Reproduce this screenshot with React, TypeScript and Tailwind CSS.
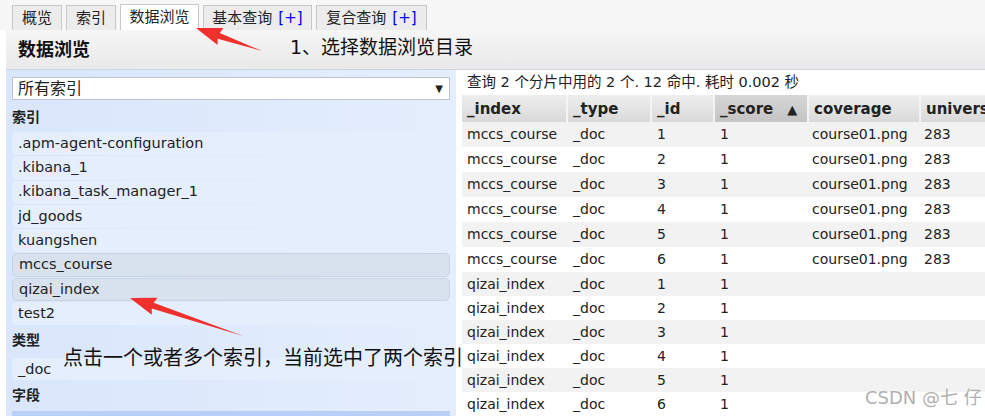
import React from "react";

const font = "font-['DejaVu_Sans','Noto_Sans_CJK_SC',sans-serif]";

const indices = [
  { name: ".apm-agent-configuration", sel: false },
  { name: ".kibana_1", sel: false },
  { name: ".kibana_task_manager_1", sel: false },
  { name: "jd_goods", sel: false },
  { name: "kuangshen", sel: false },
  { name: "mccs_course", sel: true },
  { name: "qizai_index", sel: true },
  { name: "test2", sel: false },
];

const rows = [
  ...[1, 2, 3, 4, 5, 6].map((n) => ({ index: "mccs_course", id: n, cov: "course01.png", uni: "283" })),
  ...[1, 2, 3, 4, 5, 6].map((n) => ({ index: "qizai_index", id: n, cov: "", uni: "" })),
];

const Tab = ({ label, plus, active, w }: { label: string; plus?: boolean; active?: boolean; w: string }) => (
  <div
    className={`${w} h-[25px] border border-b-0 border-[#c8c8c8] flex items-center justify-center text-[15px] text-[#222] ${
      active ? "bg-white h-[26px]" : "bg-[#ececec]"
    }`}
  >
    {label}
    {plus && <span className="ml-[6px] text-[#0000ee]">[+]</span>}
  </div>
);

const Arrow = ({ x1, y1, x2, y2 }: { x1: number; y1: number; x2: number; y2: number }) => {
  // tapered red arrow pointing from (x1,y1) to tip (x2,y2)
  const dx = x2 - x1;
  const dy = y2 - y1;
  const len = Math.hypot(dx, dy);
  const ux = dx / len;
  const uy = dy / len;
  const px = -uy;
  const py = ux;
  const headLen = 24;
  const bx = x2 - ux * headLen;
  const by = y2 - uy * headLen;
  const pts = [
    [x1, y1],
    [bx + px * 3, by + py * 3],
    [bx + px * 9 - ux * 2, by + py * 9 - uy * 2],
    [x2, y2],
    [bx - px * 9 - ux * 2, by - py * 9 - uy * 2],
    [bx - px * 3, by - py * 3],
  ]
    .map((p) => p.join(","))
    .join(" ");
  return <polygon points={pts} fill="#f0302c" />;
};

export default function App() {
  return (
    <div className={`${font} relative w-[985px] h-[416px] overflow-hidden bg-white text-[#222]`}>
      {/* tabs */}
      <div className="h-[30px] flex items-end pl-[12px] gap-[4px] bg-[#f7f7f7]">
        <Tab label="概览" w="w-[50px]" />
        <Tab label="索引" w="w-[50px]" />
        <Tab label="数据浏览" w="w-[79px]" active />
        <Tab label="基本查询" plus w="w-[109px]" />
        <Tab label="复合查询" plus w="w-[111px]" />
      </div>

      {/* header */}
      <div className="ml-[6px] h-[40px] flex items-center pl-[12px] bg-gradient-to-b from-[#f6f6f6] to-[#e9e9e9] border-b border-[#d0d6e0]">
        <span className="text-[18px] font-bold text-[#111]">数据浏览</span>
      </div>

      <div className="flex ml-[6px]">
        {/* left panel */}
        <div className="w-[450px] h-[346px] bg-gradient-to-r from-[#d9e6fb] to-[#e4eefd] px-[6px] pt-[7px]">
          <div className="h-[23px] bg-white border border-[#bcc3cc] flex items-center justify-between pl-[5px] pr-[6px]">
            <span className="text-[16px] leading-none text-[#222]">所有索引</span>
            <span className="text-[10px]">▼</span>
          </div>
          <div className="text-[14px] font-bold mt-[8px] h-[18px] leading-[18px]">索引</div>
          <div className="mt-[6px] flex flex-col gap-[1px]">
            {indices.map((it) => (
              <div
                key={it.name}
                className={`h-[23.3px] rounded-[5px] flex items-center pl-[6px] text-[14.5px] ${
                  it.sel ? "bg-[#d8e2ee] border border-[#c7d4e6]" : "bg-[#e5eefd]"
                }`}
              >
                {it.name}
              </div>
            ))}
          </div>
          <div className="text-[14px] font-bold mt-[6px] h-[18px] leading-[18px]">类型</div>
          <div className="mt-[9px] h-[22px] rounded-[5px] flex items-center pl-[6px] text-[14.5px] bg-[#e5eefd]">_doc</div>
          <div className="text-[14px] font-bold mt-[6px] h-[18px] leading-[18px]">字段</div>
          <div className="mt-[7px] h-[10px] bg-[#b9cff7]" />
        </div>

        {/* right panel */}
        <div className="flex-1 pl-[6px] overflow-hidden">
          <div className="h-[25px] flex items-center pl-[5px] text-[14.5px] text-[#222] whitespace-nowrap">
            查询 2 个分片中用的 2 个. 12 命中. 耗时 0.002 秒
          </div>
          <table className="table-fixed border-collapse w-[560px] text-[14px]">
            <colgroup>
              <col className="w-[105px]" />
              <col className="w-[84px]" />
              <col className="w-[63px]" />
              <col className="w-[94px]" />
              <col className="w-[112px]" />
              <col className="w-[102px]" />
            </colgroup>
            <thead>
              <tr className="h-[27px] text-[15px] font-bold text-[#222]">
                {["_index", "_type", "_id"].map((h) => (
                  <th key={h} className="text-left pl-[5px] pt-[2px] bg-gradient-to-b from-[#eeeeee] to-[#d9d9d9] border-r-2 border-[#f4f4f4]">
                    {h}
                  </th>
                ))}
                <th className="text-left pl-[5px] pt-[2px] bg-gradient-to-b from-[#d6d6d6] to-[#c4c4c4] border-r-2 border-[#f4f4f4] whitespace-nowrap">
                  <span>_score</span>
                  <span className="ml-[14px] text-[13px]">▲</span>
                </th>
                {["coverage", "univers"].map((h) => (
                  <th key={h} className="text-left pl-[5px] pt-[2px] bg-gradient-to-b from-[#eeeeee] to-[#d9d9d9] border-r-2 border-[#f4f4f4] whitespace-nowrap overflow-hidden">
                    {h}
                  </th>
                ))}
              </tr>
            </thead>
            <tbody>
              {rows.map((r, i) => (
                <tr key={i} className={`${i < 6 ? "h-[25px]" : "h-[24px]"} ${i % 2 === 0 ? "bg-[#f2f2f2]" : "bg-white"}`}>
                  <td className="pl-[5px]">{r.index}</td>
                  <td className="pl-[6px]">_doc</td>
                  <td className="pl-[6px]">{r.id}</td>
                  <td className="pl-[6px]">1</td>
                  <td className="pl-[4px] whitespace-nowrap">{r.cov}</td>
                  <td className="pl-[4px]">{r.uni}</td>
                </tr>
              ))}
            </tbody>
          </table>
        </div>
      </div>

      {/* annotations */}
      <div className="absolute left-[290px] top-[33px] text-[19px] text-[#111]">1、选择数据浏览目录</div>
      <div className="absolute left-[63px] top-[343px] text-[20px] text-[#111] whitespace-nowrap">
        点击一个或者多个索引，当前选中了两个索引
      </div>
      <div className="absolute left-[865px] top-[384px] text-[18px] text-[#b0b0b0] whitespace-nowrap">CSDN @七 仔</div>
      <svg className="absolute left-0 top-0 pointer-events-none" width="985" height="416">
        <Arrow x1={262} y1={51} x2={196} y2={28} />
        <Arrow x1={243} y1={336} x2={130} y2={298} />
      </svg>
    </div>
  );
}
